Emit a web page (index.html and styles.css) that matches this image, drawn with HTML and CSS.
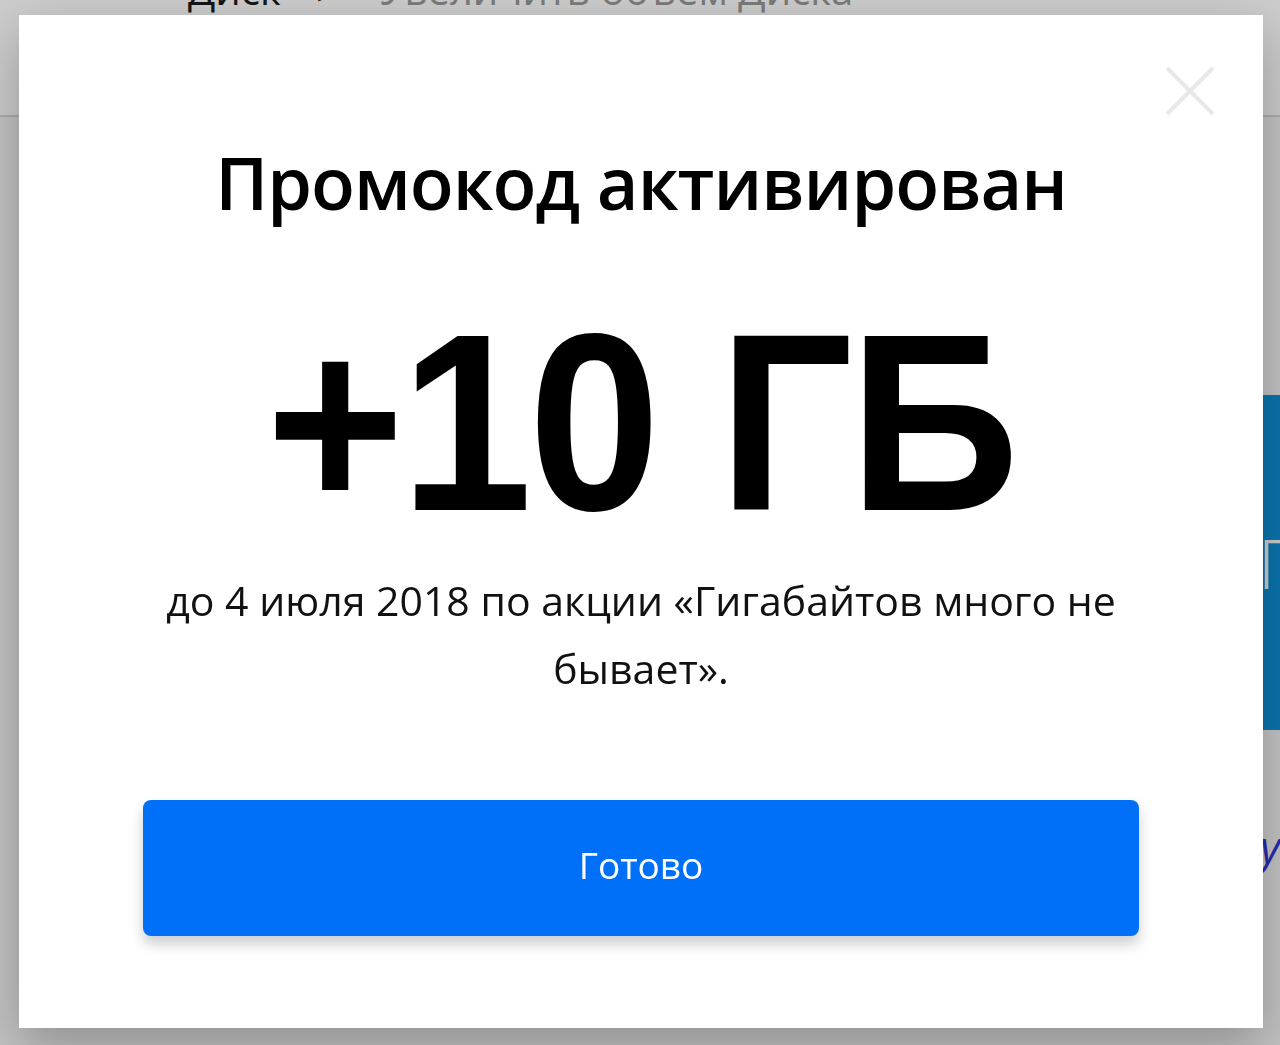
FILE: index.html
```html
<!DOCTYPE html>
<html lang="ru">
<head>
    <meta charset="UTF-8">
    <meta name="viewport" content="width=device-width, initial-scale=1.0">
    <title>Промокод активирован</title>

    <link rel="stylesheet" href="styles.css">
</head>
<body>
    <!-- page behind the dialog -->
    <header class="page-header">
        <nav class="crumbs">
            <span class="crumb">Диск</span>
            <span class="crumb-sep">&gt;</span>
            <span class="crumb crumb-current">Увеличить объём Диска</span>
        </nav>
    </header>

    <main class="page-main">
        <section class="storage"></section>
        <aside class="promo">
            <div class="promo-banner">
                <h2 class="promo-title">Гигабайтов много</h2>
            </div>
            <a class="promo-link" href="#">условия акции</a>
        </aside>
    </main>

    <div class="overlay">
        <div class="dialog">
            <button class="dialog-close" type="button" aria-label="Закрыть">
                <svg viewBox="0 0 50 50" width="50" height="50">
                    <path d="M2 2 L48 48 M48 2 L2 48" stroke="currentColor" stroke-width="4" fill="none"/>
                </svg>
            </button>

            <h1 class="dialog-title">Промокод активирован</h1>
            <div class="dialog-amount">+10 ГБ</div>
            <p class="dialog-text">до 4 июля 2018 по акции «Гигабайтов много не бывает».</p>

            <button class="dialog-button" type="button">Готово</button>
        </div>
    </div>
</body>
</html>
```

FILE: styles.css
```css
/* page */
body {
    margin: 0;
    background-color: #f4f4f4;
    font-family: "Open Sans", "Noto Sans", sans-serif;
    overflow: hidden;
    height: 1045px;
}

.page-header {
    height: 115px;
    background-color: #fff;
    border-bottom: 2px solid #d8d8d8;
    overflow: hidden;
}

.crumbs {
    display: flex;
    align-items: baseline;
    margin-top: -38px;
    padding-left: 188px;
    font-size: 40px;
    line-height: 56px;
}

.crumb {
    color: #1a1a1a;
}

.crumb-sep {
    margin: 0 46px 0 36px;
    color: #222;
    font-size: 30px;
}

.crumb-current {
    color: #999;
}

.page-main {
    display: grid;
    grid-template-columns: 1fr 540px;
}

.promo {
    padding-top: 278px;
}

.promo-banner {
    height: 335px;
    background-color: #0d92d9;
    padding-left: 518px;
    box-sizing: border-box;
    overflow: hidden;
}

.promo-title {
    margin: 128px 0 0;
    font-size: 68px;
    font-weight: 300;
    line-height: 80px;
    color: #fff;
    white-space: nowrap;
}

.promo-link {
    display: block;
    margin-top: 86px;
    padding-left: 520px;
    font-size: 44px;
    font-style: italic;
    color: #3434d6;
    text-decoration: none;
    white-space: nowrap;
}

/* dialog */
.overlay {
    position: fixed;
    inset: 0;
    background-color: rgba(0, 0, 0, 0.2);
}

.dialog {
    position: absolute;
    left: 19px;
    top: 15px;
    width: 1244px;
    height: 1013px;
    box-sizing: border-box;
    padding: 123px 124px 0;
    background-color: #fff;
    box-shadow: 0 18px 50px rgba(0, 0, 0, 0.28);
    display: flex;
    flex-direction: column;
    align-items: center;
    text-align: center;
}

.dialog-close {
    position: absolute;
    top: 51px;
    right: 48px;
    width: 50px;
    height: 50px;
    padding: 0;
    border: 0;
    background: none;
    color: #e8e8e8;
    cursor: pointer;
}

.dialog-close svg {
    display: block;
}

.dialog-title {
    margin: 0;
    font-size: 72px;
    font-weight: 600;
    line-height: 88px;
    letter-spacing: -1px;
    color: #000;
}

.dialog-amount {
    margin-top: 72px;
    font-family: "Liberation Sans", Arial, sans-serif;
    font-size: 252px;
    font-weight: 700;
    line-height: 250px;
    letter-spacing: -4px;
    color: #000;
    transform: scaleX(0.94);
}

.dialog-text {
    margin: 18px 0 0;
    font-size: 41px;
    line-height: 68px;
    color: #111;
}

.dialog-button {
    width: 100%;
    height: 136px;
    margin-top: 98px;
    padding-bottom: 8px;
    border: 0;
    border-radius: 8px;
    background-color: #0070f8;
    box-shadow: 0 8px 14px rgba(0, 0, 0, 0.2);
    font-family: "Open Sans", "Noto Sans", sans-serif;
    font-size: 37px;
    color: #fff;
    cursor: pointer;
}
```
